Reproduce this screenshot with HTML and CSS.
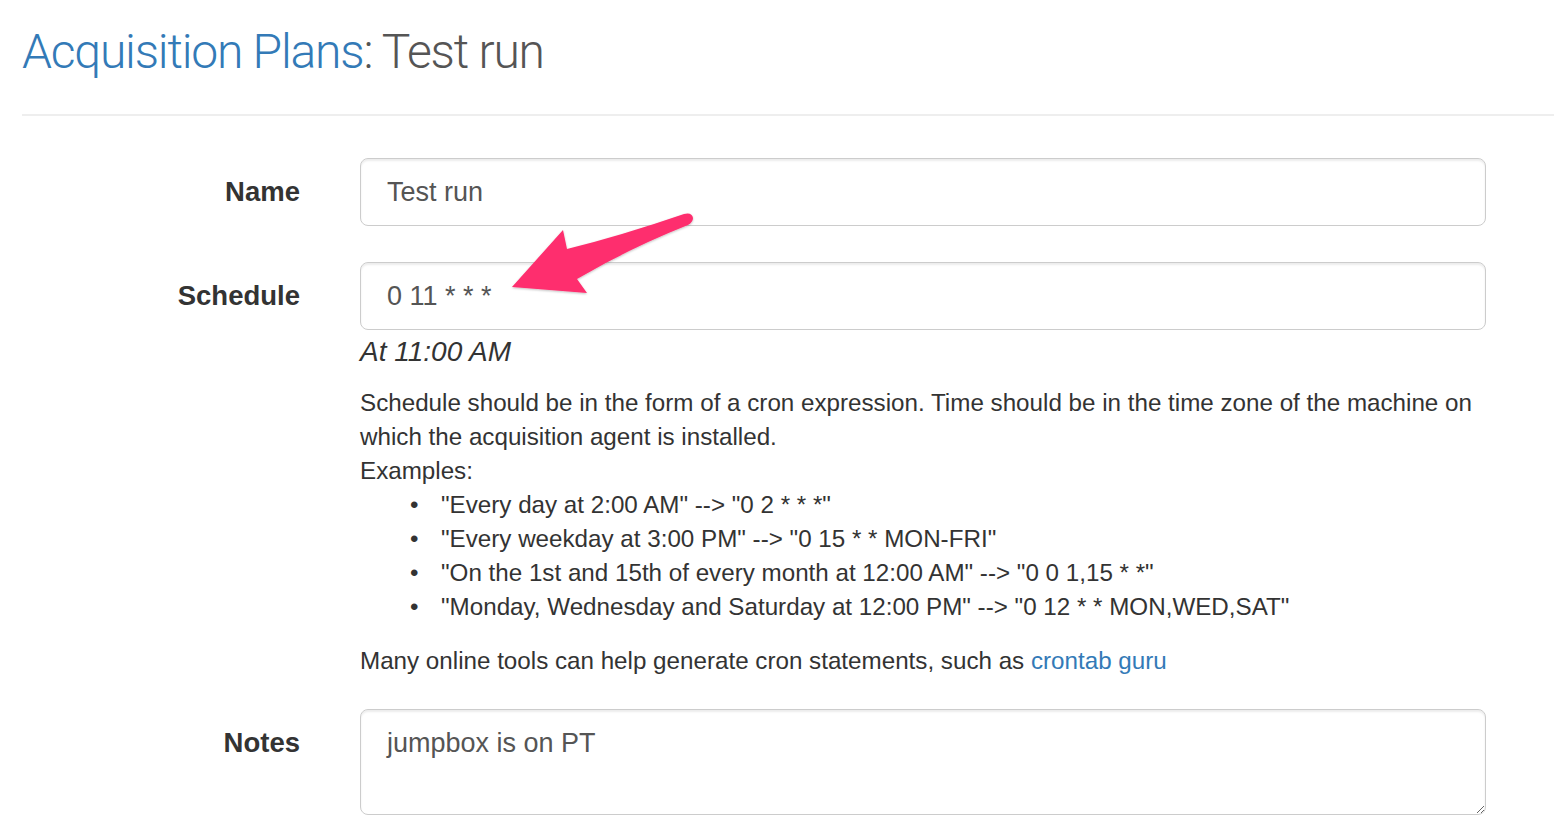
FILE: index.html
```html
<!DOCTYPE html>
<html lang="en">
<head>
<meta charset="utf-8">
<title>Acquisition Plans: Test run</title>
<link rel="stylesheet" href="styles.css">
</head>
<body>
<div class="page">
  <div class="page-header">
    <h1 class="title"><span class="crumb">Acquisition Plans</span>: <span class="current">Test run</span></h1>
  </div>
  <form class="form">
    <div class="form-row">
      <label class="form-label" for="name">Name</label>
      <div class="form-field">
        <input class="form-control" id="name" type="text" value="Test run">
      </div>
    </div>
    <div class="form-row form-row-help">
      <label class="form-label" for="schedule">Schedule</label>
      <div class="form-field">
        <input class="form-control" id="schedule" type="text" value="0 11 * * *">
        <div class="cron-desc">At 11:00 AM</div>
        <div class="help">
          <p class="help-text">Schedule should be in the form of a cron expression. Time should be in the time zone of the machine on which the acquisition agent is installed.<br>Examples:</p>
          <ul class="examples">
            <li>"Every day at 2:00 AM" --&gt; "0 2 * * *"</li>
            <li>"Every weekday at 3:00 PM" --&gt; "0 15 * * MON-FRI"</li>
            <li>"On the 1st and 15th of every month at 12:00 AM" --&gt; "0 0 1,15 * *"</li>
            <li>"Monday, Wednesday and Saturday at 12:00 PM" --&gt; "0 12 * * MON,WED,SAT"</li>
          </ul>
          <p class="help-text">Many online tools can help generate cron statements, such as <a class="link" href="#">crontab guru</a></p>
        </div>
      </div>
    </div>
    <div class="form-row">
      <label class="form-label" for="notes">Notes</label>
      <div class="form-field">
        <textarea class="form-control textarea" id="notes">jumpbox is on PT</textarea>
      </div>
    </div>
  </form>
  <svg class="annotation" width="1554" height="836" viewBox="0 0 1554 836" aria-hidden="true">
    <defs>
      <filter id="sh" x="-10%" y="-10%" width="120%" height="120%">
        <feDropShadow dx="0" dy="1" stdDeviation="1.2" flood-color="#000" flood-opacity="0.25"/>
      </filter>
    </defs>
    <path filter="url(#sh)" fill="#fe2e6e" d="M512 287 L563 230 L567 249 Q620 236 684 214 Q692 212 693 218 Q693 222 688 225 Q630 248 577 279 L587 293 Z"/>
  </svg>
</div>
</body>
</html>
```

FILE: styles.css
```css
html, body {
  margin: 0;
  padding: 0;
  background: #fff;
}

body {
  font-family: "Liberation Sans", Arial, sans-serif;
  color: #333;
  font-size: 24.2px;
  line-height: 34px;
}

.page {
  position: relative;
  padding-left: 22px;
  width: 1532px;
  height: 836px;
  overflow: hidden;
}

.page-header {
  padding-top: 22px;
  padding-bottom: 32px;
  border-bottom: 2px solid #eee;
  margin-bottom: 42px;
}

.title {
  margin: 0;
  font-family: Roboto, "Liberation Sans", sans-serif;
  font-weight: 300;
  font-size: 48px;
  line-height: 60px;
  letter-spacing: -1.2px;
  color: #555;
}

.crumb {
  color: #337ab7;
}

.current {
  color: #555;
}

.form-row {
  display: grid;
  grid-template-columns: 278px 1126px;
  column-gap: 60px;
  margin-bottom: 36px;
}

.form-row-help {
  margin-bottom: 31px;
}

.form-label {
  text-align: right;
  font-weight: bold;
  font-size: 27.5px;
  line-height: 68px;
  color: #333;
}

.form-control {
  display: block;
  box-sizing: border-box;
  width: 100%;
  height: 68px;
  margin: 0;
  padding: 0 26px;
  border: 1px solid #ccc;
  border-radius: 8px;
  background: #fff;
  box-shadow: inset 0 2px 2px rgba(0, 0, 0, 0.075);
  font-family: "Liberation Sans", Arial, sans-serif;
  font-size: 27px;
  color: #555;
  outline: none;
}

.textarea {
  height: 106px;
  padding: 16px 26px;
  line-height: 34px;
  resize: vertical;
}

.cron-desc {
  font-style: italic;
  font-size: 28px;
  line-height: 40px;
  margin-top: 2px;
  color: #333;
}

.help {
  margin-top: 14px;
}

.help-text {
  margin: 0;
}

.examples {
  margin: 0 0 20px 0;
  padding-left: 81px;
  list-style: none;
}

.examples li::before {
  content: "\2022";
  display: inline-block;
  width: 31px;
  margin-left: -31px;
  line-height: 1;
  vertical-align: baseline;
}

.link {
  color: #337ab7;
  text-decoration: none;
}

.annotation {
  position: absolute;
  left: 0;
  top: 0;
  pointer-events: none;
}
```
